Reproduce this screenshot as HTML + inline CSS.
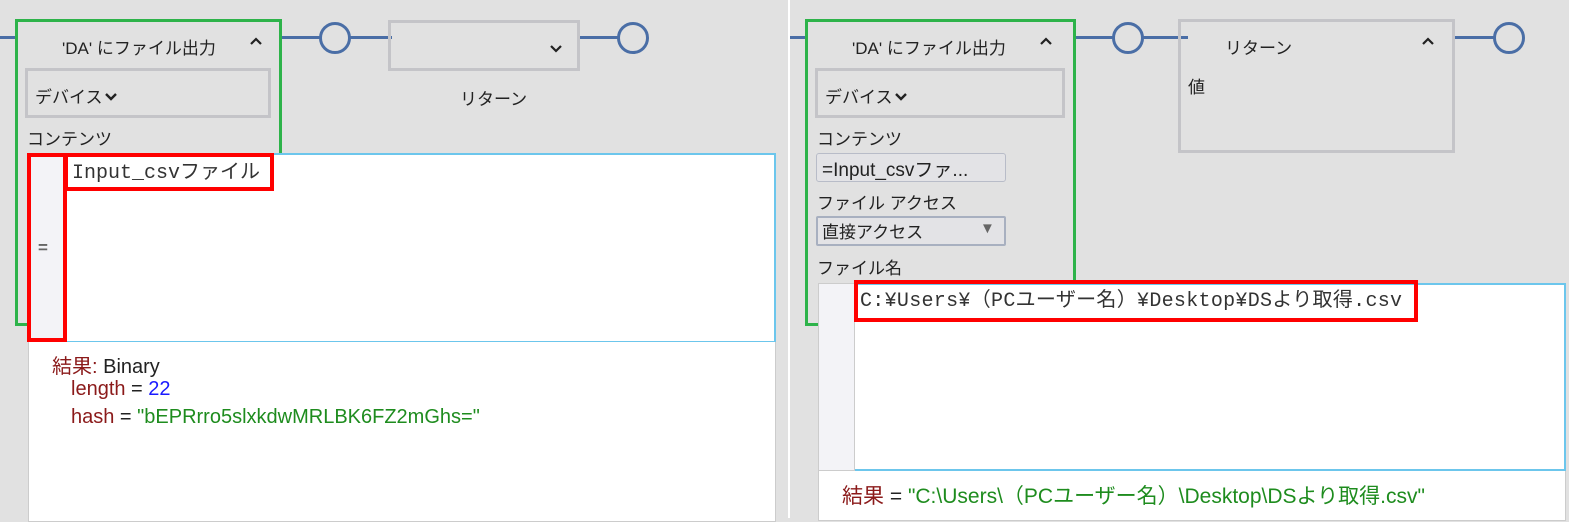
<!DOCTYPE html>
<html><head><meta charset="utf-8"><style>
*{margin:0;padding:0;box-sizing:border-box}
body{width:1569px;height:518px;background:#e1e1e1;position:relative;overflow:hidden;font-family:"Liberation Sans","Noto Sans CJK JP",sans-serif;font-size:17px;color:#222}
.a{position:absolute}
.line{position:absolute;height:3px;background:#4a6ea6}
.circ{position:absolute;width:32px;height:32px;border:3px solid #4a6ea6;border-radius:50%;background:#e1e1e1}
.green{position:absolute;border:3px solid #2db34a}
.gbox{position:absolute;border:3px solid #c4c4c8}
.mono{font-family:"Liberation Mono","Noto Sans CJK JP",monospace;font-size:20px;color:#333;white-space:nowrap;line-height:24px}
.res{font-size:20px;white-space:nowrap}
.red{position:absolute;border:4px solid #f00}
svg{position:absolute}
</style></head><body>
<div class="a" style="left:788px;top:0;width:2px;height:518px;background:#fff"></div>

<!-- LEFT -->
<div class="line" style="left:0;top:36px;width:16px"></div>
<div class="line" style="left:282px;top:36px;width:110px"></div>
<div class="line" style="left:578px;top:36px;width:40px"></div>
<div class="circ" style="left:319px;top:22px"></div>
<div class="circ" style="left:617px;top:22px"></div>
<div class="green" style="left:15px;top:19px;width:267px;height:307px"></div>
<div class="a" style="left:62px;top:34px">'DA' にファイル出力</div>
<svg style="left:249px;top:36px" width="14" height="10"><path d="M2 8 L7 3 L12 8" stroke="#222" stroke-width="2.2" fill="none"/></svg>
<div class="gbox" style="left:25px;top:68px;width:246px;height:50px"></div>
<div class="a" style="left:35px;top:83px">デバイス</div>
<svg style="left:104px;top:92px" width="14" height="10"><path d="M2 2 L7 7 L12 2" stroke="#222" stroke-width="2.4" fill="none"/></svg>
<div class="a" style="left:27px;top:125px">コンテンツ</div>
<div class="gbox" style="left:388px;top:20px;width:192px;height:51px"></div>
<svg style="left:549px;top:44px" width="14" height="10"><path d="M2 2 L7 7 L12 2" stroke="#222" stroke-width="2.2" fill="none"/></svg>
<div class="a" style="left:460px;top:85px">リターン</div>

<div class="a" style="left:28px;top:153px;width:748px;height:190px;background:#fff;border:2px solid #6cc6ec"></div>
<div class="a" style="left:28px;top:153px;width:38px;height:190px;background:#f3f3f7"></div>
<div class="a" style="left:38px;top:238px;font-weight:bold;color:#666">=</div>
<div class="red" style="left:27px;top:153px;width:40px;height:189px"></div>
<div class="red" style="left:64px;top:153px;width:210px;height:38px"></div>
<div class="a mono" style="left:72px;top:162px">Input_csvファイル</div>
<div class="a" style="left:28px;top:342px;width:748px;height:180px;background:#fff;border:1px solid #ccc;border-top:none"></div>
<div class="a res" style="left:52px;top:350px"><span style="color:#8b1a1a">結果:</span> Binary</div>
<div class="a res" style="left:71px;top:378px"><span style="color:#8b1a1a">length</span> = <span style="color:#1a1aff">22</span></div>
<div class="a res" style="left:71px;top:406px"><span style="color:#8b1a1a">hash</span> = <span style="color:#1e8c1e">"bEPRrro5slxkdwMRLBK6FZ2mGhs="</span></div>

<!-- RIGHT -->
<div class="line" style="left:790px;top:36px;width:16px"></div>
<div class="line" style="left:1076px;top:36px;width:112px"></div>
<div class="line" style="left:1454px;top:36px;width:40px"></div>
<div class="circ" style="left:1112px;top:22px"></div>
<div class="circ" style="left:1493px;top:22px"></div>
<div class="green" style="left:805px;top:19px;width:271px;height:307px"></div>
<div class="a" style="left:852px;top:34px">'DA' にファイル出力</div>
<svg style="left:1039px;top:36px" width="14" height="10"><path d="M2 8 L7 3 L12 8" stroke="#222" stroke-width="2.2" fill="none"/></svg>
<div class="gbox" style="left:815px;top:68px;width:250px;height:50px"></div>
<div class="a" style="left:825px;top:83px">デバイス</div>
<svg style="left:894px;top:92px" width="14" height="10"><path d="M2 2 L7 7 L12 2" stroke="#222" stroke-width="2.4" fill="none"/></svg>
<div class="a" style="left:817px;top:125px">コンテンツ</div>
<div class="a" style="left:816px;top:153px;width:190px;height:29px;border:1px solid #b8bcc8;border-radius:3px;background:#e3e3e6"></div>
<div class="a" style="left:822px;top:155px;color:#222;font-size:19px">=Input_csvファ...</div>
<div class="a" style="left:817px;top:189px">ファイル アクセス</div>
<div class="a" style="left:816px;top:216px;width:190px;height:30px;border:2px solid #a8b0c0;border-radius:2px;background:#e3e3e6"></div>
<div class="a" style="left:822px;top:218px">直接アクセス</div>
<div class="a" style="left:980px;top:220px;color:#666;font-size:15px">▼</div>
<div class="a" style="left:817px;top:254px">ファイル名</div>
<div class="gbox" style="left:1178px;top:19px;width:277px;height:134px"></div>
<div class="a" style="left:1225px;top:34px">リターン</div>
<svg style="left:1421px;top:36px" width="14" height="10"><path d="M2 8 L7 3 L12 8" stroke="#222" stroke-width="2.2" fill="none"/></svg>
<div class="a" style="left:1188px;top:73px">値</div>

<div class="a" style="left:818px;top:283px;width:748px;height:188px;background:#fff;border:2px solid #6cc6ec"></div>
<div class="a" style="left:818px;top:283px;width:37px;height:188px;background:#f3f3f7;border:1px solid #ccc"></div>
<div class="red" style="left:854px;top:280px;width:564px;height:42px"></div>
<div class="a mono" style="left:860px;top:290px;letter-spacing:0.3px">C:¥Users¥（PCユーザー名）¥Desktop¥DSより取得.csv</div>
<div class="a" style="left:818px;top:471px;width:748px;height:50px;background:#fff;border:1px solid #ccc;border-top:none"></div>
<div class="a res" style="left:842px;top:480px;font-size:21px"><span style="color:#8b1a1a">結果</span> = <span style="color:#1e8c1e">"C:\Users\（PCユーザー名）\Desktop\DSより取得.csv"</span></div>
</body></html>
